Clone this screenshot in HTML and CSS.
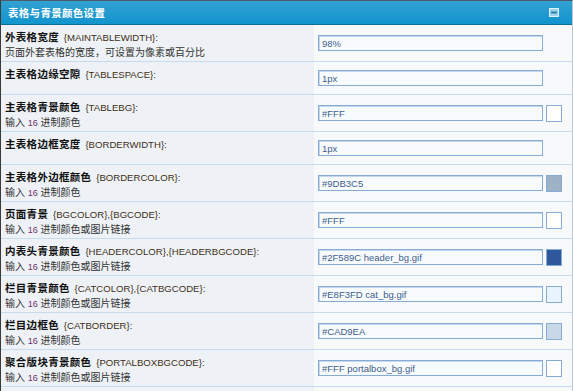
FILE: index.html
```html
<!DOCTYPE html>
<html lang="zh-CN">
<head>
    <meta charset="UTF-8">
    <meta name="viewport" content="width=device-width, initial-scale=1.0">
    <title>表格与青景颜色设置</title>
    <link rel="stylesheet" href="styles.css">
</head>
<body>
    <div class="panel">
        <div class="panel-head">
            <span class="panel-title">表格与青景颜色设置</span>
            <svg class="collapse" width="10" height="9" viewBox="0 0 10 9">
                <rect x="0.5" y="0.5" width="9" height="8" fill="#9fd3ec" stroke="#dff1fa"/>
                <rect x="2" y="3.5" width="6" height="2" fill="#2f7fae"/>
            </svg>
        </div>

        <div class="row">
            <div class="label">
                <b>外表格宽度</b> <span class="var">{MAINTABLEWIDTH}:</span>
                <div class="desc">页面外套表格的宽度，可设置为像素或百分比</div>
            </div>
            <div class="value"><input class="txt" type="text" value="98%"></div>
        </div>

        <div class="row">
            <div class="label">
                <b>主表格边缘空隙</b> <span class="var">{TABLESPACE}:</span>
            </div>
            <div class="value"><input class="txt" type="text" value="1px"></div>
        </div>

        <div class="row">
            <div class="label">
                <b>主表格青景颜色</b> <span class="var">{TABLEBG}:</span>
                <div class="desc">输入 <span class="num">16</span> 进制颜色</div>
            </div>
            <div class="value">
                <input class="txt" type="text" value="#FFF">
                <span class="swatch" style="background:#FFFFFF"></span>
            </div>
        </div>

        <div class="row">
            <div class="label">
                <b>主表格边框宽度</b> <span class="var">{BORDERWIDTH}:</span>
            </div>
            <div class="value"><input class="txt" type="text" value="1px"></div>
        </div>

        <div class="row">
            <div class="label">
                <b>主表格外边框颜色</b> <span class="var">{BORDERCOLOR}:</span>
                <div class="desc">输入 <span class="num">16</span> 进制颜色</div>
            </div>
            <div class="value">
                <input class="txt" type="text" value="#9DB3C5">
                <span class="swatch" style="background:#9DB3C5"></span>
            </div>
        </div>

        <div class="row">
            <div class="label">
                <b>页面青景</b> <span class="var">{BGCOLOR},{BGCODE}:</span>
                <div class="desc">输入 <span class="num">16</span> 进制颜色或图片链接</div>
            </div>
            <div class="value">
                <input class="txt" type="text" value="#FFF">
                <span class="swatch" style="background:#FFFFFF"></span>
            </div>
        </div>

        <div class="row">
            <div class="label">
                <b>内表头青景颜色</b> <span class="var">{HEADERCOLOR},{HEADERBGCODE}:</span>
                <div class="desc">输入 <span class="num">16</span> 进制颜色或图片链接</div>
            </div>
            <div class="value">
                <input class="txt" type="text" value="#2F589C header_bg.gif">
                <span class="swatch" style="background:#2F589C"></span>
            </div>
        </div>

        <div class="row">
            <div class="label">
                <b>栏目青景颜色</b> <span class="var">{CATCOLOR},{CATBGCODE}:</span>
                <div class="desc">输入 <span class="num">16</span> 进制颜色或图片链接</div>
            </div>
            <div class="value">
                <input class="txt" type="text" value="#E8F3FD cat_bg.gif">
                <span class="swatch" style="background:#E8F3FD"></span>
            </div>
        </div>

        <div class="row">
            <div class="label">
                <b>栏目边框色</b> <span class="var">{CATBORDER}:</span>
                <div class="desc">输入 <span class="num">16</span> 进制颜色</div>
            </div>
            <div class="value">
                <input class="txt" type="text" value="#CAD9EA">
                <span class="swatch" style="background:#CAD9EA"></span>
            </div>
        </div>

        <div class="row">
            <div class="label">
                <b>聚合版块青景颜色</b> <span class="var">{PORTALBOXBGCODE}:</span>
                <div class="desc">输入 <span class="num">16</span> 进制颜色或图片链接</div>
            </div>
            <div class="value">
                <input class="txt" type="text" value="#FFF portalbox_bg.gif">
                <span class="swatch" style="background:#FFFFFF"></span>
            </div>
        </div>

        <div class="row">
            <div class="label"></div>
            <div class="value"></div>
        </div>
    </div>
</body>
</html>
```

FILE: styles.css
```css
html, body {
    overflow: hidden;
}
body {
    margin: 0;
    font-family: "Liberation Sans", "Noto Sans CJK SC", sans-serif;
    font-size: 10px;
    color: #333;
    background: #f7f9fb;
}
.panel {
    border-left: 1px solid #3a3a3a;
    border-top: 1px solid #4a5a66;
    border-right: 1px solid #b9c9d8;
}
.panel-head {
    height: 23px;
    display: flex;
    align-items: center;
    justify-content: space-between;
    padding: 0 13px 0 7px;
    background: linear-gradient(#33a1d2, #1194cd);
    border-bottom: 1px solid #0f6d99;
}
.panel-title {
    color: #fff;
    font-weight: bold;
    font-size: 10.5px;
    letter-spacing: 0.3px;
}
.collapse {
    display: block;
}
.row {
    display: grid;
    grid-template-columns: 313px 1fr;
    border-bottom: 1px solid #c6dcee;
}
.label {
    padding: 5px 4px 1px;
    line-height: 15px;
    background: #eef2f6;
    color: #111;
}
.label b,
.label .var,
.label .num {
    line-height: 1;
}
.desc {
    height: 15px;
    color: #333;
}
.label b {
    font-size: 10.5px;
    letter-spacing: 0.3px;
}
.var {
    color: #3e2f16;
    font-size: 9.6px;
    margin-left: 2px;
}
.num {
    color: #70306a;
    font-size: 9px;
}
.value {
    display: flex;
    align-items: center;
    gap: 3px;
    padding: 8px 0 8px 4px;
}
.txt {
    box-sizing: border-box;
    width: 225px;
    height: 16px;
    margin: 0;
    padding: 0 3px;
    border: 1px solid #86abd4;
    box-shadow: inset 1px 1px 0 #c5d7ea;
    background: #f8fbfd;
    font-family: "Liberation Sans", sans-serif;
    font-size: 9.5px;
    color: #3d5d8b;
    outline: none;
}
.swatch {
    box-sizing: border-box;
    width: 16px;
    height: 17px;
    border: 1px solid #86abd4;
}
```
